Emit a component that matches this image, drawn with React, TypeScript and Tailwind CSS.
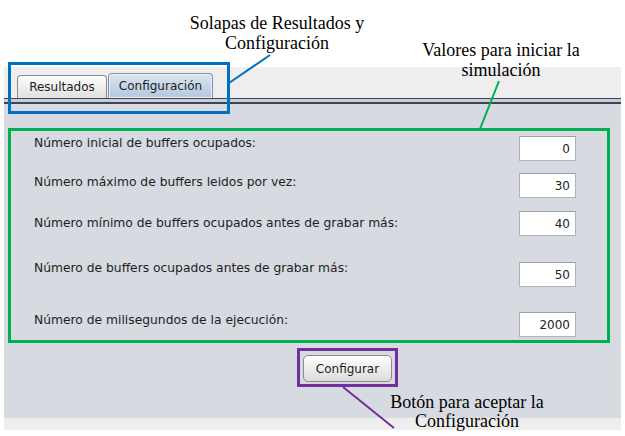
import React from "react";

const ui = { fontFamily: '"DejaVu Sans", "Liberation Sans", sans-serif' };
const serif = { fontFamily: '"Liberation Serif", "Times New Roman", serif' };

const rows = [
  { label: "Número inicial de buffers ocupados:", value: "0", mt: "mt-0", lab: "mb-[10px]" },
  { label: "Número máximo de buffers leidos por vez:", value: "30", mt: "mt-[12px]", lab: "mb-[7px]" },
  { label: "Número mínimo de buffers ocupados antes de grabar más:", value: "40", mt: "mt-[13px]", lab: "mb-0" },
  { label: "Número de buffers ocupados antes de grabar más:", value: "50", mt: "mt-[26px]", lab: "mb-[13px]" },
  { label: "Número de milisegundos de la ejecución:", value: "2000", mt: "mt-[25px]", lab: "mb-[9px]" },
];

export default function App() {
  return (
    <div className="relative w-[625px] h-[436px] bg-white overflow-hidden" style={ui}>
      <div className="h-[67px]" />
      <div className="ml-[4px] w-[617px] h-[363px] bg-[#eeeeee] flex flex-col">
        {/* tab strip */}
        <div className="h-[31px] flex items-end pl-[13px] gap-[1px]">
          <div className="h-[23px] w-[90px] flex items-center justify-center rounded-t-[4px] border border-b-0 border-[#8a8a8a] bg-gradient-to-b from-[#fdfdfd] to-[#e0e0e0] text-[12px] text-[#1e1e1e]">
            Resultados
          </div>
          <div className="h-[25px] w-[105px] flex items-center justify-center rounded-t-[4px] border border-b-0 border-[#7d93ad] bg-gradient-to-b from-[#dbe6f2] to-[#b3c7dc] text-[12px] text-[#1e1e1e] shadow-[inset_0_0_0_1px_#e8eef6]">
            Configuración
          </div>
        </div>
        {/* separator lines */}
        <div className="h-[6px] border-t border-b-2 border-[#3d4656] bg-[#c9cdd6]" />
        {/* panel */}
        <div className="h-[314px] bg-[#d7dae0] pl-[4px] pr-[11px] pt-[24px] flex flex-col">
          <div className="h-[215px] border-[3px] border-[#00b050] pl-[23px] pr-[31px] pt-[5px] flex flex-col">
            {rows.map((r) => (
              <div key={r.label} className={`h-[25px] flex items-center justify-between ${r.mt}`}>
                <span className={`text-[12.3px] text-[#1e1e1e] ${r.lab}`}>{r.label}</span>
                <div className="w-[57px] h-[25px] bg-white border border-[#b0b4ba] border-t-[#9a9ea5] flex items-center justify-end pr-[5px] text-[12px] text-[#1e1e1e]">
                  {r.value}
                </div>
              </div>
            ))}
          </div>
          <div className="mt-[5px] ml-[289px] w-[101px] border-[3px] border-[#7030a0] px-[3px] pt-[4px] pb-[2px]">
            <div className="h-[27px] rounded-[5px] border border-[#8b8b8b] bg-gradient-to-b from-[#ffffff] to-[#dcdcdc] flex items-center justify-center text-[12px] text-[#1e1e1e]">
              Configurar
            </div>
          </div>
        </div>
      </div>

      {/* annotations */}
      <div className="absolute left-[8px] top-[62px] w-[222px] h-[52px] border-[3px] border-[#0070c0]" />
      <svg className="absolute left-0 top-0" width="625" height="436" viewBox="0 0 625 436">
        <line x1="229" y1="83" x2="270" y2="55" stroke="#0070c0" strokeWidth="2" />
        <line x1="499" y1="81" x2="480" y2="129" stroke="#00b050" strokeWidth="2" />
        <line x1="343" y1="387" x2="394" y2="428" stroke="#7030a0" strokeWidth="2" />
      </svg>
      <div className="absolute left-[157px] top-[13px] w-[240px] text-center text-[18px] leading-[20px] text-black" style={serif}>
        Solapas de Resultados y<br />Configuración
      </div>
      <div className="absolute left-[381px] top-[40px] w-[240px] text-center text-[18px] leading-[20px] text-black" style={serif}>
        Valores para iniciar la<br />simulación
      </div>
      <div className="absolute left-[347px] top-[393px] w-[240px] text-center text-[18px] leading-[19px] text-black" style={serif}>
        Botón para aceptar la<br />Configuración
      </div>
    </div>
  );
}
